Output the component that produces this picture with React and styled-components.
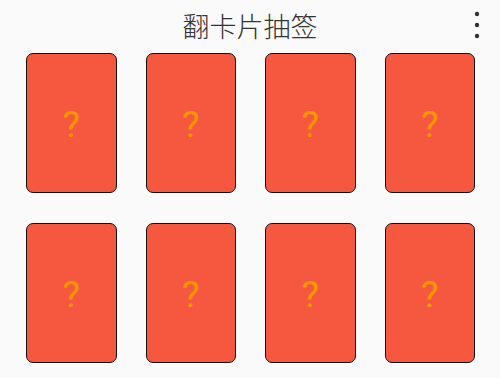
import styled, { createGlobalStyle } from 'styled-components';

const GlobalStyle = createGlobalStyle`
  html, body {
    margin: 0;
    padding: 0;
    background: #fafafa;
  }
  body {
    font-family: Roboto, "Noto Sans CJK SC", sans-serif;
  }
`;

const Page = styled.div`
  width: 500px;
  height: 378px;
  background: #fafafa;
  overflow: hidden;
`;

const Header = styled.header`
  position: relative;
  height: 53px;
  display: flex;
  align-items: center;
  justify-content: center;
`;

const Title = styled.h1`
  margin: 0;
  margin-top: -2px;
  font-family: "Noto Sans CJK SC", sans-serif;
  font-weight: 300;
  font-size: 27px;
  line-height: 1;
  color: #333333;
`;

const MenuButton = styled.button`
  position: absolute;
  right: 14px;
  top: 9px;
  width: 18px;
  height: 32px;
  padding: 0;
  border: none;
  background: transparent;
  display: flex;
  align-items: center;
  justify-content: center;
`;

const Grid = styled.div`
  display: grid;
  grid-template-columns: repeat(4, 1fr);
  column-gap: 29px;
  row-gap: 30px;
  padding: 0 25px 0 26px;
`;

const Card = styled.div`
  height: 140px;
  box-sizing: border-box;
  background: #f5583f;
  border: 1.5px solid #111;
  border-radius: 7px;
  display: flex;
  align-items: center;
  justify-content: center;
`;

const Mark = styled.span`
  font-family: Roboto, sans-serif;
  font-size: 37px;
  line-height: 1;
  color: #ff9800;
  margin-top: 2px;
`;

const MoreIcon = () => (
  <svg width="6" height="28" viewBox="0 0 6 28">
    <circle cx="3" cy="3" r="2.2" fill="#333" />
    <circle cx="3" cy="14" r="2.2" fill="#333" />
    <circle cx="3" cy="25" r="2.2" fill="#333" />
  </svg>
);

const cards = Array.from({ length: 8 }, (_, i) => i);

const App = () => (
  <Page>
    <GlobalStyle />
    <Header>
      <Title>翻卡片抽签</Title>
      <MenuButton aria-label="more">
        <MoreIcon />
      </MenuButton>
    </Header>
    <Grid>
      {cards.map(i => (
        <Card key={i}>
          <Mark>?</Mark>
        </Card>
      ))}
    </Grid>
  </Page>
);

export default App;
